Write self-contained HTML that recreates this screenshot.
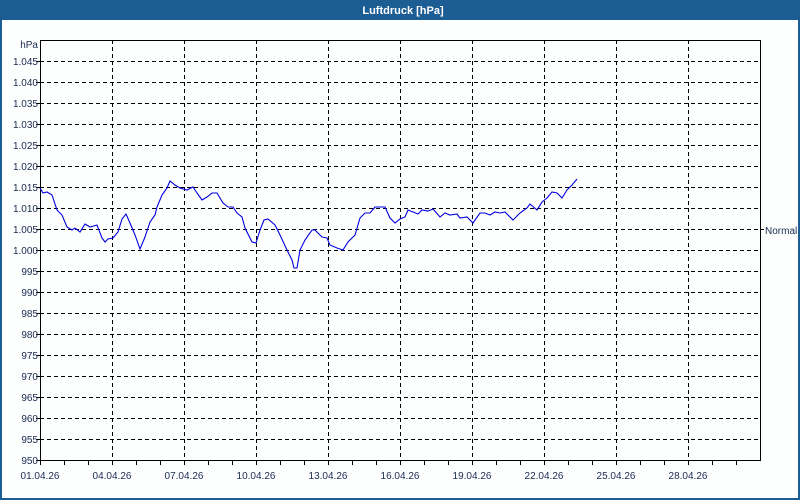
<!DOCTYPE html>
<html><head><meta charset="utf-8"><style>
html,body{margin:0;padding:0;background:#fff;}
svg{display:block;font-family:"Liberation Sans","DejaVu Sans",sans-serif;}
</style></head><body>
<svg width="800" height="500" xmlns="http://www.w3.org/2000/svg">
<rect x="0" y="0" width="800" height="500" fill="#fdfefe"/>
<rect x="0" y="0" width="800" height="20" fill="#1c5e94"/>
<rect x="0" y="0" width="2" height="500" fill="#1c5e94"/>
<rect x="798" y="0" width="2" height="500" fill="#1c5e94"/>
<rect x="0" y="498" width="800" height="2" fill="#1c5e94"/>
<text x="403" y="14" fill="#fff" font-size="11" font-weight="bold" text-anchor="middle">Luftdruck [hPa]</text>
<g stroke="#000" stroke-width="1" stroke-dasharray="4,3" fill="none">
<path d="M40 61.5H760M40 82.5H760M40 103.5H760M40 124.5H760M40 145.5H760M40 166.5H760M40 187.5H760M40 208.5H760M40 229.5H760M40 250.5H760M40 271.5H760M40 292.5H760M40 313.5H760M40 334.5H760M40 355.5H760M40 376.5H760M40 397.5H760M40 418.5H760M40 439.5H760"/>
<path d="M112.5 40V460M184.5 40V460M256.5 40V460M328.5 40V460M400.5 40V460M472.5 40V460M544.5 40V460M616.5 40V460M688.5 40V460"/>
</g>
<g stroke="#000" stroke-width="1" fill="none">
<path d="M40.5 40V460.5H760.5V40M40 40.5H41"/>
<path d="M40.5 40.5H760"/>
<path d="M64.5 460v5M88.5 460v5M112.5 460v5M136.5 460v5M160.5 460v5M184.5 460v5M208.5 460v5M232.5 460v5M256.5 460v5M280.5 460v5M304.5 460v5M328.5 460v5M352.5 460v5M376.5 460v5M400.5 460v5M424.5 460v5M448.5 460v5M472.5 460v5M496.5 460v5M520.5 460v5M544.5 460v5M568.5 460v5M592.5 460v5M616.5 460v5M640.5 460v5M664.5 460v5M688.5 460v5M712.5 460v5M736.5 460v5M40.5 460v5"/>
<path d="M36 61.5h4M36 82.5h4M36 103.5h4M36 124.5h4M36 145.5h4M36 166.5h4M36 187.5h4M36 208.5h4M36 229.5h4M36 250.5h4M36 271.5h4M36 292.5h4M36 313.5h4M36 334.5h4M36 355.5h4M36 376.5h4M36 397.5h4M36 418.5h4M36 439.5h4M36 460.5h4"/>
<path d="M760 229.5h4"/>
</g>
<g font-size="10" fill="#1a2a50" text-anchor="end">
<text x="38" y="48">hPa</text>
<text x="38" y="65">1.045</text><text x="38" y="86">1.040</text><text x="38" y="107">1.035</text><text x="38" y="128">1.030</text><text x="38" y="149">1.025</text><text x="38" y="170">1.020</text><text x="38" y="191">1.015</text><text x="38" y="212">1.010</text><text x="38" y="233">1.005</text><text x="38" y="254">1.000</text><text x="38" y="275">995</text><text x="38" y="296">990</text><text x="38" y="317">985</text><text x="38" y="338">980</text><text x="38" y="359">975</text><text x="38" y="380">970</text><text x="38" y="401">965</text><text x="38" y="422">960</text><text x="38" y="443">955</text><text x="38" y="464">950</text>
</g>
<text x="765" y="234" font-size="10" fill="#1a2a50">Normal</text>
<g font-size="10" fill="#1a2a50" text-anchor="middle">
<text x="40" y="479">01.04.26</text><text x="112" y="479">04.04.26</text><text x="184" y="479">07.04.26</text><text x="256" y="479">10.04.26</text><text x="328" y="479">13.04.26</text><text x="400" y="479">16.04.26</text><text x="472" y="479">19.04.26</text><text x="544" y="479">22.04.26</text><text x="616" y="479">25.04.26</text><text x="688" y="479">28.04.26</text>
</g>
<polyline fill="none" stroke="#0000e0" stroke-width="1.1" points="40,188 43,193 47,192 52,195 57,210 62,215 67,227 72,230 75,228 80,232 85,224 90,227 97,225 102,238 105,242 108,239 113,238 118,232 122,219 126,214 130,223 135,235 140,249 145,237 150,222 155,215 157,207 162,195 167,188 170,181 175,185 180,188 187,190 193,187 197,193 202,200 207,197 212,193 217,193 223,203 228,207 233,207 237,213 242,217 245,228 252,242 256,243 260,230 264,220 268,219 275,225 280,235 287,250 292,260 294,268 297,268 300,250 305,240 312,230 315,230 322,237 327,238 330,245 337,248 343,250 348,242 355,235 360,218 365,213 370,213 375,207 382,207 385,207 390,218 395,223 400,219 405,217 408,210 413,212 418,214 422,210 428,211 433,209 440,217 445,213 450,215 457,214 460,218 467,217 473,223 480,213 485,213 490,215 495,212 500,213 505,212 513,220 520,213 527,208 530,204 537,210 542,202 547,198 552,192 557,193 562,198 567,190 572,185 577,179"/>
</svg>
</body></html>
